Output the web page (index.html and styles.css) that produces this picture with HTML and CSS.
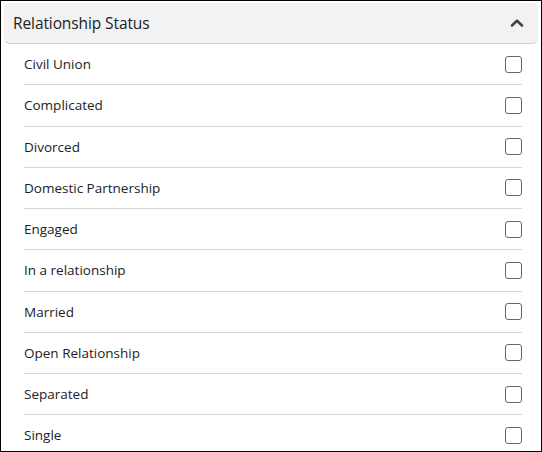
FILE: index.html
```html
<!DOCTYPE html>
<html>
<head>
<meta charset="utf-8">
<link rel="stylesheet" href="styles.css">
</head>
<body>
<div class="panel">
  <div class="header">
    <span class="title">Relationship Status</span>
    <svg class="chev" width="14" height="10" viewBox="0 0 14 10"><path d="M2 7.5 L7 2.8 L12 7.5" fill="none" stroke="#444" stroke-width="2.6" stroke-linecap="round" stroke-linejoin="round"/></svg>
  </div>
  <ul class="list">
    <li class="row"><span>Civil Union</span><span class="box"></span></li>
    <li class="row"><span>Complicated</span><span class="box"></span></li>
    <li class="row"><span>Divorced</span><span class="box"></span></li>
    <li class="row"><span>Domestic Partnership</span><span class="box"></span></li>
    <li class="row"><span>Engaged</span><span class="box"></span></li>
    <li class="row"><span>In a relationship</span><span class="box"></span></li>
    <li class="row"><span>Married</span><span class="box"></span></li>
    <li class="row"><span>Open Relationship</span><span class="box"></span></li>
    <li class="row"><span>Separated</span><span class="box"></span></li>
    <li class="row"><span>Single</span><span class="box"></span></li>
  </ul>
</div>
</body>
</html>
```

FILE: styles.css
```css
html, body { margin: 0; padding: 0; background: #fff; }
.panel {
  box-sizing: border-box;
  width: 542px;
  height: 452px;
  border: 1px solid #000;
  padding: 2px 3px 0;
  overflow: hidden;
  font-family: "Open Sans", "Noto Sans", sans-serif;
  color: #222;
}
.header {
  box-sizing: border-box;
  height: 41px;
  background: #f2f2f2;
  border-radius: 6px;
  border-bottom: 1px solid #cfcfcf;
  display: flex;
  align-items: center;
  justify-content: space-between;
  padding: 0 14px 0 9px;
}
.title { font-size: 15.5px; letter-spacing: -0.1px; }
.chev { display: block; }
.list { list-style: none; margin: 0 16px 0 20px; padding: 0; }
.row {
  box-sizing: border-box;
  height: 41.25px;
  border-bottom: 1px solid #d6d6d6;
  display: flex;
  align-items: center;
  justify-content: space-between;
  font-size: 13.5px;
}
.box {
  box-sizing: border-box;
  width: 17px;
  height: 17px;
  border: 1px solid #666;
  border-radius: 3px;
  background: #fff;
}
```
